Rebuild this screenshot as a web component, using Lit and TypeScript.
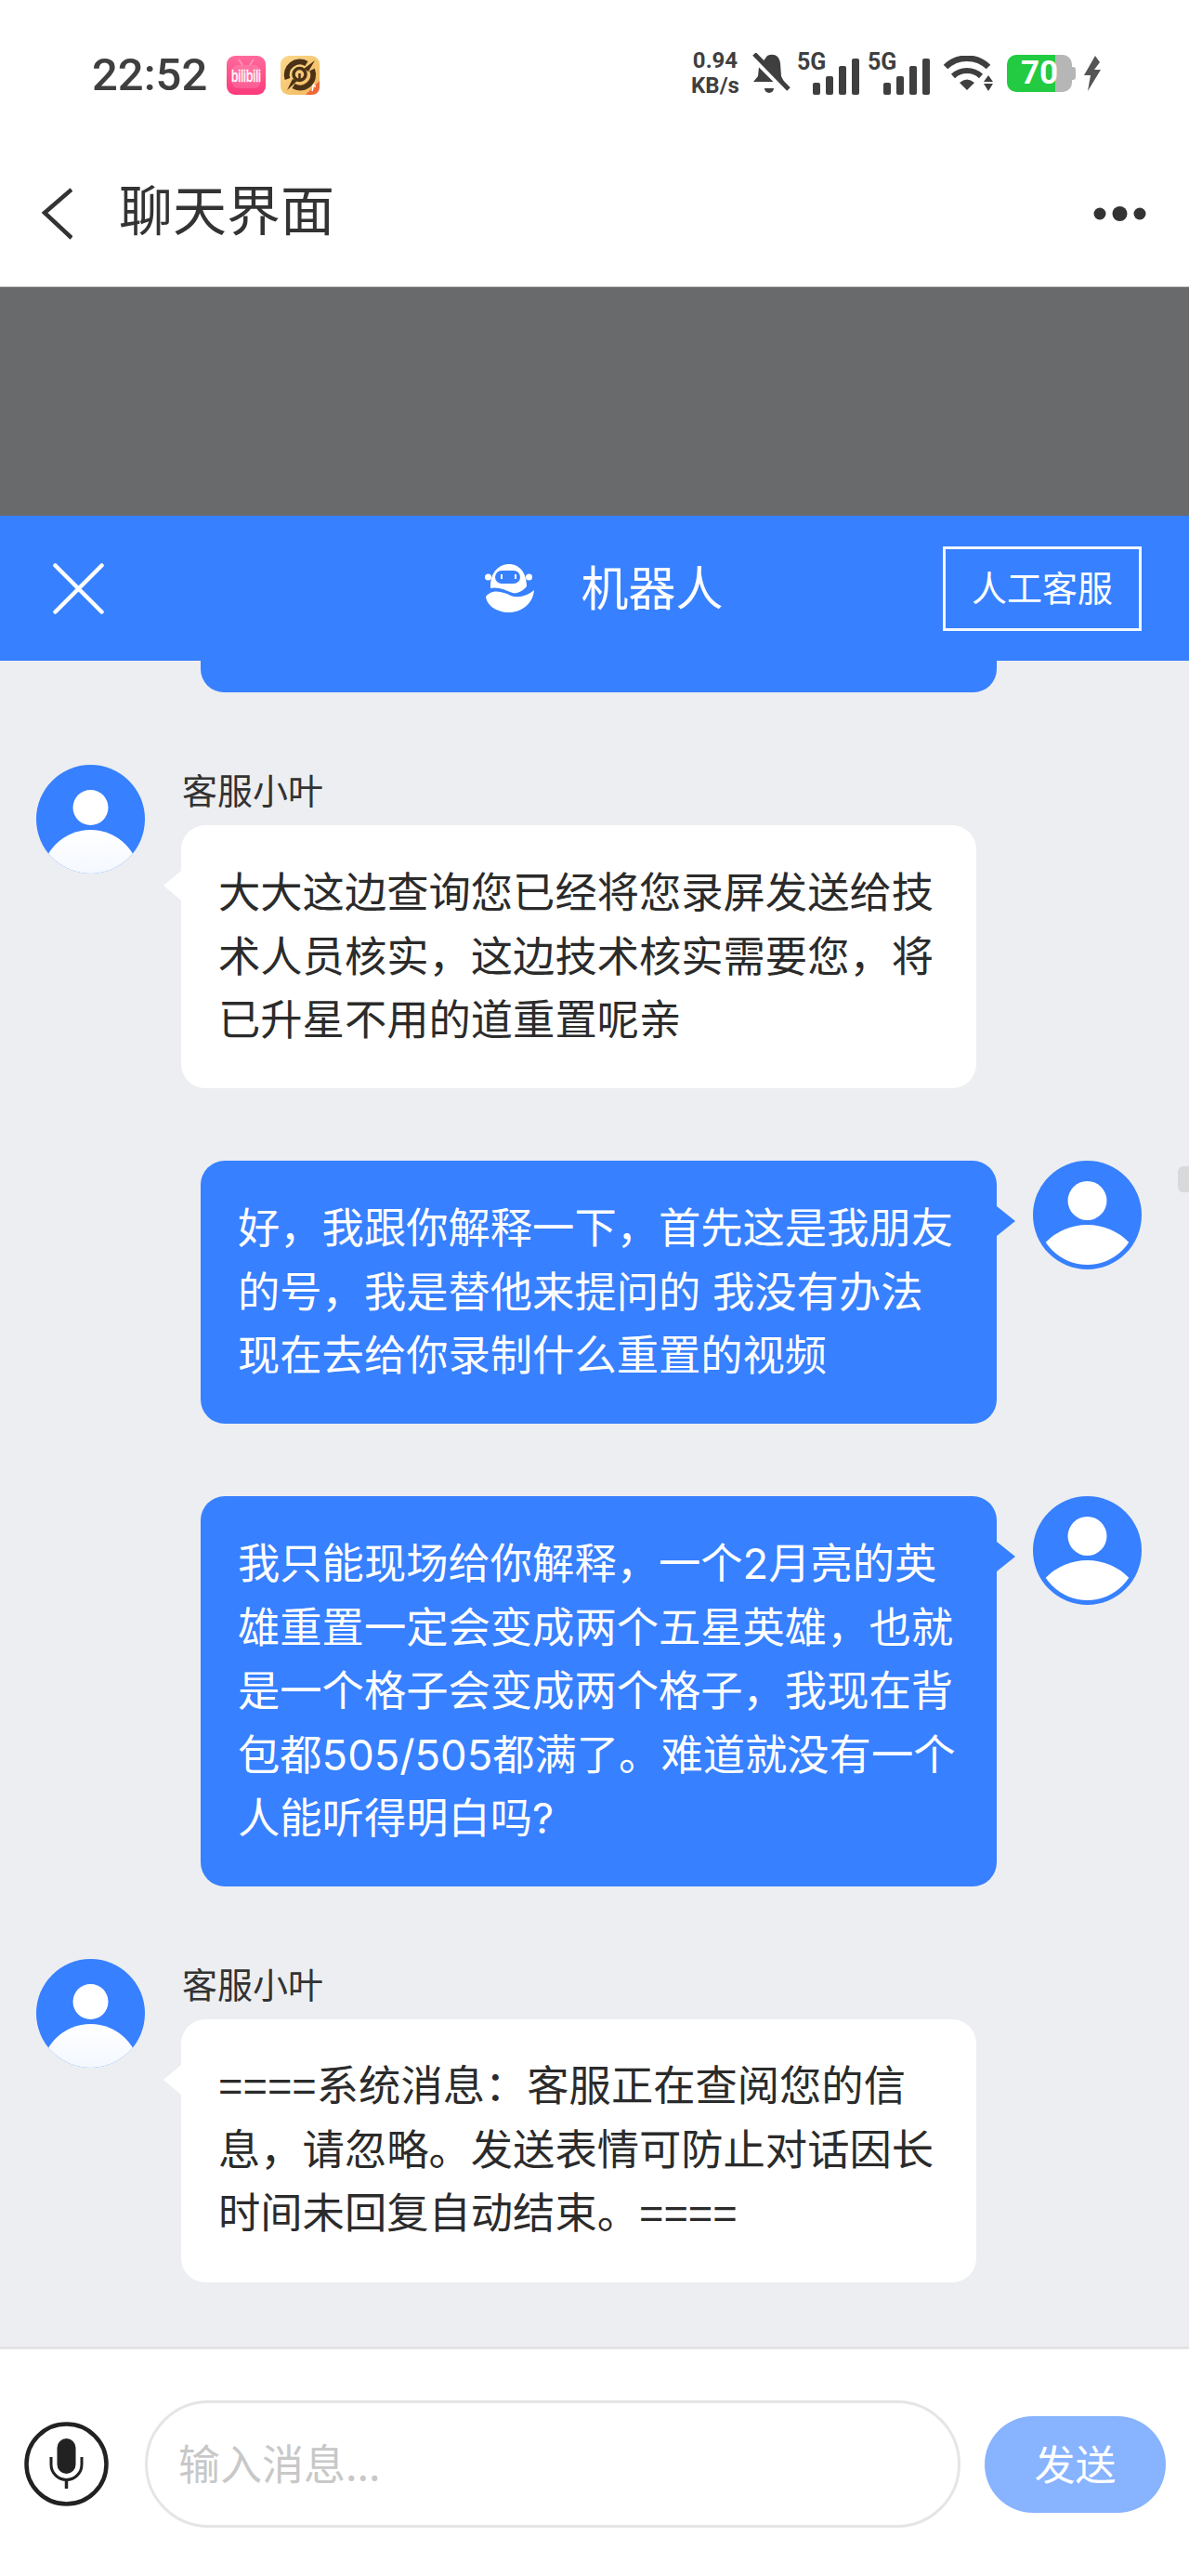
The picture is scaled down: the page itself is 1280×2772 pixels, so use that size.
import { LitElement, html, css } from "lit";
import { customElement } from "lit/decorators.js";

const FIRST_REPLY = "大大这边查询您已经将您录屏发送给技术人员核实，这边技术核实需要您，将已升星不用的道重置呢亲";
const MINE_ONE = "好，我跟你解释一下，首先这是我朋友的号，我是替他来提问的 我没有办法现在去给你录制什么重置的视频";
const MINE_TWO = "我只能现场给你解释，一个2月亮的英雄重置一定会变成两个五星英雄，也就是一个格子会变成两个格子，我现在背包都505/505都满了。难道就没有一个人能听得明白吗?";
const SYSTEM_REPLY = "====系统消息：客服正在查阅您的信息，请忽略。发送表情可防止对话因长时间未回复自动结束。====";

// agent avatar: body runs to the rim and fades
const agentAvatar = () => html`
  <svg class="avatar" viewBox="0 0 117 117">
    <defs>
      <clipPath id="round"><circle cx="58.5" cy="58.5" r="58.5"></circle></clipPath>
      <linearGradient id="body" x1="0" y1="0" x2="0" y2="1">
        <stop offset="0" stop-color="#ffffff"></stop>
        <stop offset="1" stop-color="#e6efff"></stop>
      </linearGradient>
    </defs>
    <circle cx="58.5" cy="58.5" r="58.5" fill="#3780ff"></circle>
    <circle cx="58.5" cy="46" r="19" fill="#fff"></circle>
    <circle cx="58.5" cy="123" r="53" fill="url(#body)" clip-path="url(#round)"></circle>
  </svg>
`;

// user avatar: white body inside a blue ring
const userAvatar = () => html`
  <svg class="avatar" viewBox="0 0 117 117">
    <defs>
      <clipPath id="inner"><circle cx="58.5" cy="58.5" r="53.5"></circle></clipPath>
    </defs>
    <circle cx="58.5" cy="58.5" r="58.5" fill="#3780ff"></circle>
    <circle cx="58.5" cy="43" r="21" fill="#fff"></circle>
    <circle cx="58.5" cy="131.8" r="62.8" fill="#fff" clip-path="url(#inner)"></circle>
  </svg>
`;

const bars = () => html`
  <svg class="bars" viewBox="0 0 50 40">
    <rect x="0" y="27" width="8" height="13" rx="2"></rect>
    <rect x="14" y="20" width="8" height="20" rx="2"></rect>
    <rect x="28" y="9" width="8" height="31" rx="2"></rect>
    <rect x="42" y="1" width="8" height="39" rx="2"></rect>
  </svg>
`;

@customElement("app-root")
export class AppRoot extends LitElement {
  static styles = css`
    :host {
      display: flex;
      flex-direction: column;
      width: 1280px;
      height: 2772px;
      background: #fff;
      overflow: hidden;
      font-family: "Noto Sans CJK SC", "Noto Sans", sans-serif;
    }
    .status {
      height: 158px;
      flex: none;
      display: flex;
      align-items: center;
      justify-content: space-between;
      padding: 0 94px 0 99px;
      box-sizing: border-box;
      color: #3f3f3f;
    }
    .status-left,
    .status-right {
      display: flex;
      align-items: center;
    }
    .status-left {
      margin-top: 4px;
    }
    .time {
      font-family: Roboto, sans-serif;
      font-size: 49px;
      font-weight: 500;
      line-height: 58px;
      margin-right: 21px;
      white-space: nowrap;
    }
    .app-icon {
      width: 42px;
      height: 42px;
      display: block;
    }
    .app-icon + .app-icon {
      margin-left: 16px;
    }
    .speed {
      font-family: Roboto, sans-serif;
      font-size: 24px;
      font-weight: 700;
      line-height: 27px;
      width: 52px;
      text-align: center;
      white-space: nowrap;
    }
    .bell {
      width: 41px;
      height: 44px;
      margin-left: 14px;
    }
    .signal {
      position: relative;
      width: 67px;
      height: 45px;
      margin-left: 7px;
    }
    .signal + .signal {
      margin-left: 9px;
    }
    .signal span {
      position: absolute;
      left: 0;
      top: -5px;
      font-family: Roboto, sans-serif;
      font-size: 25px;
      font-weight: 700;
      line-height: 29px;
    }
    .bars {
      position: absolute;
      right: 0;
      bottom: 0;
      width: 50px;
      height: 40px;
      fill: #3f3f3f;
    }
    .wifi {
      width: 54px;
      height: 38px;
      margin-left: 14px;
    }
    .battery {
      position: relative;
      width: 70px;
      height: 40px;
      margin-left: 15px;
      border-radius: 10px;
      background: linear-gradient(90deg, #22cb41 52px, #b6b6b6 52px);
      color: #fff;
      font-family: Roboto, sans-serif;
      font-size: 35px;
      font-weight: 700;
      line-height: 40px;
      padding-left: 15px;
      box-sizing: border-box;
    }
    .battery::after {
      content: "";
      position: absolute;
      right: -4px;
      top: 13px;
      width: 4px;
      height: 14px;
      border-radius: 0 3px 3px 0;
      background: #b6b6b6;
    }
    .bolt {
      width: 20px;
      height: 38px;
      margin-left: 12px;
    }

    .appbar {
      height: 151px;
      flex: none;
      display: flex;
      align-items: center;
      box-sizing: border-box;
      padding: 0 46px 6px 45px;
      border-bottom: 1px solid #c9c9c9;
      color: #333;
    }
    .back {
      width: 33px;
      height: 56px;
      flex: none;
    }
    .appbar h1 {
      margin: 0 0 14px 50px;
      flex: 1;
      font-size: 58px;
      font-weight: 400;
      line-height: 70px;
    }
    .more {
      width: 57px;
      height: 16px;
      flex: none;
    }

    .dim {
      height: 246px;
      flex: none;
      background: #696a6c;
    }

    .head {
      height: 156px;
      flex: none;
      display: grid;
      grid-template-columns: 1fr auto 1fr;
      align-items: center;
      padding: 0 51px 0 57px;
      background: #3780ff;
      color: #fff;
    }
    .close {
      width: 55px;
      height: 55px;
      display: block;
    }
    .who {
      display: flex;
      align-items: center;
      padding-left: 15px;
      font-size: 51px;
      line-height: 60px;
    }
    .who span {
      margin-bottom: 6px;
    }
    .bot {
      width: 53px;
      height: 52px;
      margin-right: 50px;
    }
    .human {
      justify-self: end;
      width: 214px;
      height: 91px;
      box-sizing: border-box;
      border: 3px solid #f4f8ff;
      padding-bottom: 5px;
      display: flex;
      align-items: center;
      justify-content: center;
      font-size: 38px;
    }

    .chat {
      position: relative;
      flex: 1;
      min-height: 0;
      background: #eceef1;
      display: flex;
      flex-direction: column;
      gap: 78.5px;
      overflow: hidden;
    }
    .stub {
      height: 33.5px;
      flex: none;
      margin: 0 207px 0 216px;
      background: #3780ff;
      border-radius: 0 0 25px 25px;
    }
    .msg {
      display: flex;
      flex: none;
    }
    .msg.in {
      padding-left: 39px;
      gap: 39px;
    }
    .msg.out {
      justify-content: flex-end;
      padding-right: 51px;
      gap: 39px;
    }
    .avatar {
      width: 117px;
      height: 117px;
      flex: none;
    }
    .name {
      margin: 0 0 14px 1px;
      font-size: 38px;
      line-height: 51px;
      color: #333;
    }
    .bubble {
      position: relative;
      box-sizing: border-box;
      width: 857px;
      padding: 39px 40px 38px;
      border-radius: 26px;
      font-family: Inter, "Noto Sans CJK SC", sans-serif;
      font-size: 45.3px;
      line-height: 68.5px;
    }
    .bubble.sys {
      font-family: "Liberation Sans", "Noto Sans CJK SC", sans-serif;
    }
    .in .bubble {
      background: #fff;
      color: #2b2b2b;
      width: 856px;
    }
    .out .bubble {
      background: #3780ff;
      color: #fff;
    }
    .bubble::before {
      content: "";
      position: absolute;
      top: 49px;
      border-top: 16px solid transparent;
      border-bottom: 16px solid transparent;
    }
    .in .bubble::before {
      left: -19px;
      border-right: 19px solid #fff;
    }
    .out .bubble::before {
      right: -20px;
      border-left: 20px solid #3780ff;
    }
    .thumb {
      position: absolute;
      right: 0;
      top: 544px;
      width: 12px;
      height: 28px;
      border-radius: 6px 0 0 6px;
      background: #d8d9db;
    }

    .bottom {
      height: 247px;
      flex: none;
      box-sizing: border-box;
      border-top: 3px solid #e3e3e3;
      display: flex;
      align-items: center;
      padding: 3px 25px 0 26px;
      background: #fff;
    }
    .mic {
      width: 91px;
      height: 91px;
      flex: none;
      display: block;
    }
    .input {
      flex: 1;
      height: 137px;
      margin: 0 26px 0 39px;
      box-sizing: border-box;
      border: 3px solid #e5e5e5;
      border-radius: 69px;
      padding: 0 0 4px 33px;
      display: flex;
      align-items: center;
      font-size: 45px;
      color: #c8c8c8;
    }
    .send {
      width: 195px;
      height: 104px;
      flex: none;
      border-radius: 52px;
      background: #87b3ff;
      color: #fff;
      padding-bottom: 4px;
      box-sizing: border-box;
      display: flex;
      align-items: center;
      justify-content: center;
      font-size: 44px;
    }
  `;

  render() {
    return html`
      <div class="status">
        <div class="status-left">
          <span class="time">22:52</span>
          <svg class="app-icon" viewBox="0 0 42 42">
            <defs>
              <linearGradient id="pink" x1="0" y1="0" x2="0" y2="1">
                <stop offset="0" stop-color="#ff6a9c"></stop>
                <stop offset="1" stop-color="#fb3a7c"></stop>
              </linearGradient>
            </defs>
            <rect width="42" height="42" rx="9" fill="url(#pink)"></rect>
            <rect x="6" y="10" width="30" height="25" rx="6" fill="#fff" opacity=".14"></rect>
            <path d="M13 4l4 6M29 4l-4 6" stroke="#fff" stroke-opacity=".3" stroke-width="2"></path>
            <text transform="translate(5 28) scale(1 1.35)" font-family="Liberation Sans" font-size="14" fill="#fff" stroke="#fff" stroke-width=".3" textLength="32" lengthAdjust="spacingAndGlyphs">bilibili</text>
          </svg>
          <svg class="app-icon" viewBox="0 0 42 42">
            <defs>
              <linearGradient id="gold" x1="0" y1="0" x2="1" y2="1">
                <stop offset="0" stop-color="#fbd98c"></stop>
                <stop offset="1" stop-color="#f2b75c"></stop>
              </linearGradient>
            </defs>
            <rect width="42" height="42" rx="9" fill="url(#gold)"></rect>
            <path d="M28 8.5A14 14 0 0 0 7.500 25M14 32.500A14 14 0 0 0 34 15" fill="none" stroke="#4b3216" stroke-width="6"></path>
            <path d="M37 5L25 14 30 17zM7 37l11-10 -5-2z" fill="#4b3216"></path>
            <circle cx="20.500" cy="20" r="6.500" fill="none" stroke="#4b3216" stroke-width="3.500"></circle>
            <path d="M20.500 19v7" stroke="#4b3216" stroke-width="2.500"></path>
            <path d="M42 27L27 42h6q9 0 9-9z" fill="#f0673a"></path>
            <path d="M34 32l4 1M36 30l-2 8" stroke="#fff" stroke-width="1.500"></path>
          </svg>
        </div>
        <div class="status-right">
          <div class="speed">0.94<br />KB/s</div>
          <svg class="bell" viewBox="0 0 41 44">
            <path d="M16 3C22 0 29 2 30 11l1 14 3 6H1l5-6 1-10z" fill="#3f3f3f"></path>
            <path d="M13 38h10a5 5 0 0 1-10 0z" fill="#3f3f3f"></path>
            <path d="M-2 3L40 45" stroke="#fff" stroke-width="5"></path>
            <path d="M2 1L39 39" stroke="#3f3f3f" stroke-width="5"></path>
          </svg>
          <div class="signal"><span>5G</span>${bars()}</div>
          <div class="signal"><span>5G</span>${bars()}</div>
          <svg class="wifi" viewBox="0 0 54 38" fill="#3f3f3f">
            <path d="M3 12A33 33 0 0 1 49 12" fill="none" stroke="#3f3f3f" stroke-width="6.500"></path>
            <path d="M11 22A22 22 0 0 1 41 22" fill="none" stroke="#3f3f3f" stroke-width="6"></path>
            <path d="M18 29Q26 22 34 29L26 37z"></path>
            <path d="M49 21l5 7H44zM44 30h10l-5 8z"></path>
          </svg>
          <div class="battery">70</div>
          <svg class="bolt" viewBox="0 0 20 38">
            <path d="M13 0L1 21h7L5 38 19 15h-7l6-8z" fill="#555"></path>
          </svg>
        </div>
      </div>

      <div class="appbar">
        <svg class="back" viewBox="0 0 33 56">
          <path d="M32 2L3 27 32 54" fill="none" stroke="#333" stroke-width="4.500"></path>
        </svg>
        <h1>聊天界面</h1>
        <svg class="more" viewBox="0 0 57 16" fill="#333">
          <circle cx="7" cy="8" r="6.500"></circle>
          <circle cx="28.500" cy="8" r="8"></circle>
          <circle cx="50" cy="8" r="6.500"></circle>
        </svg>
      </div>

      <div class="dim"></div>

      <div class="head">
        <svg class="close" viewBox="0 0 55 55">
          <path d="M2.500 2.500L52.500 52.500M52.500 2.500L2.500 52.500" stroke="#fff" stroke-width="4.500" stroke-linecap="round"></path>
        </svg>
        <div class="who">
          <svg class="bot" viewBox="0 0 53 52" fill="#fff">
            <circle cx="3.500" cy="14" r="3.500"></circle>
            <circle cx="47.500" cy="14" r="3.500"></circle>
            <path d="M6 24C6 8 16 0 26 0S45 8 45 24C40 30 34 32 30 31 22 28 14 24 6 26z"></path>
            <rect x="11" y="7" width="27" height="14" rx="7" fill="#3780ff"></rect>
            <rect x="17" y="11" width="2" height="5"></rect>
            <rect x="32" y="11" width="2" height="5"></rect>
            <path d="M1 35C8 26 20 30 28 34 36 37 46 34 53 28 52 42 40 52 26 52 12 52 2 44 1 35z"></path>
          </svg>
          <span>机器人</span>
        </div>
        <div class="human">人工客服</div>
      </div>

      <div class="chat">
        <div class="stub"></div>
        <div class="msg in">
          ${agentAvatar()}
          <div>
            <div class="name">客服小叶</div>
            <div class="bubble">${FIRST_REPLY}</div>
          </div>
        </div>
        <div class="msg out">
          <div class="bubble">${MINE_ONE}</div>
          ${userAvatar()}
        </div>
        <div class="msg out">
          <div class="bubble">${MINE_TWO}</div>
          ${userAvatar()}
        </div>
        <div class="msg in">
          ${agentAvatar()}
          <div>
            <div class="name">客服小叶</div>
            <div class="bubble sys">${SYSTEM_REPLY}</div>
          </div>
        </div>
        <div class="thumb"></div>
      </div>

      <div class="bottom">
        <svg class="mic" viewBox="0 0 91 91">
          <circle cx="45.500" cy="45.500" r="43" fill="none" stroke="#222" stroke-width="4.500"></circle>
          <rect x="35.500" y="18" width="20" height="38" rx="10" fill="#222"></rect>
          <path d="M29 38v8a16.500 16.500 0 0 0 33 0v-8" fill="none" stroke="#222" stroke-width="3"></path>
          <path d="M45.500 62v10" stroke="#222" stroke-width="3.500"></path>
        </svg>
        <div class="input">输入消息...</div>
        <div class="send">发送</div>
      </div>
    `;
  }
}
